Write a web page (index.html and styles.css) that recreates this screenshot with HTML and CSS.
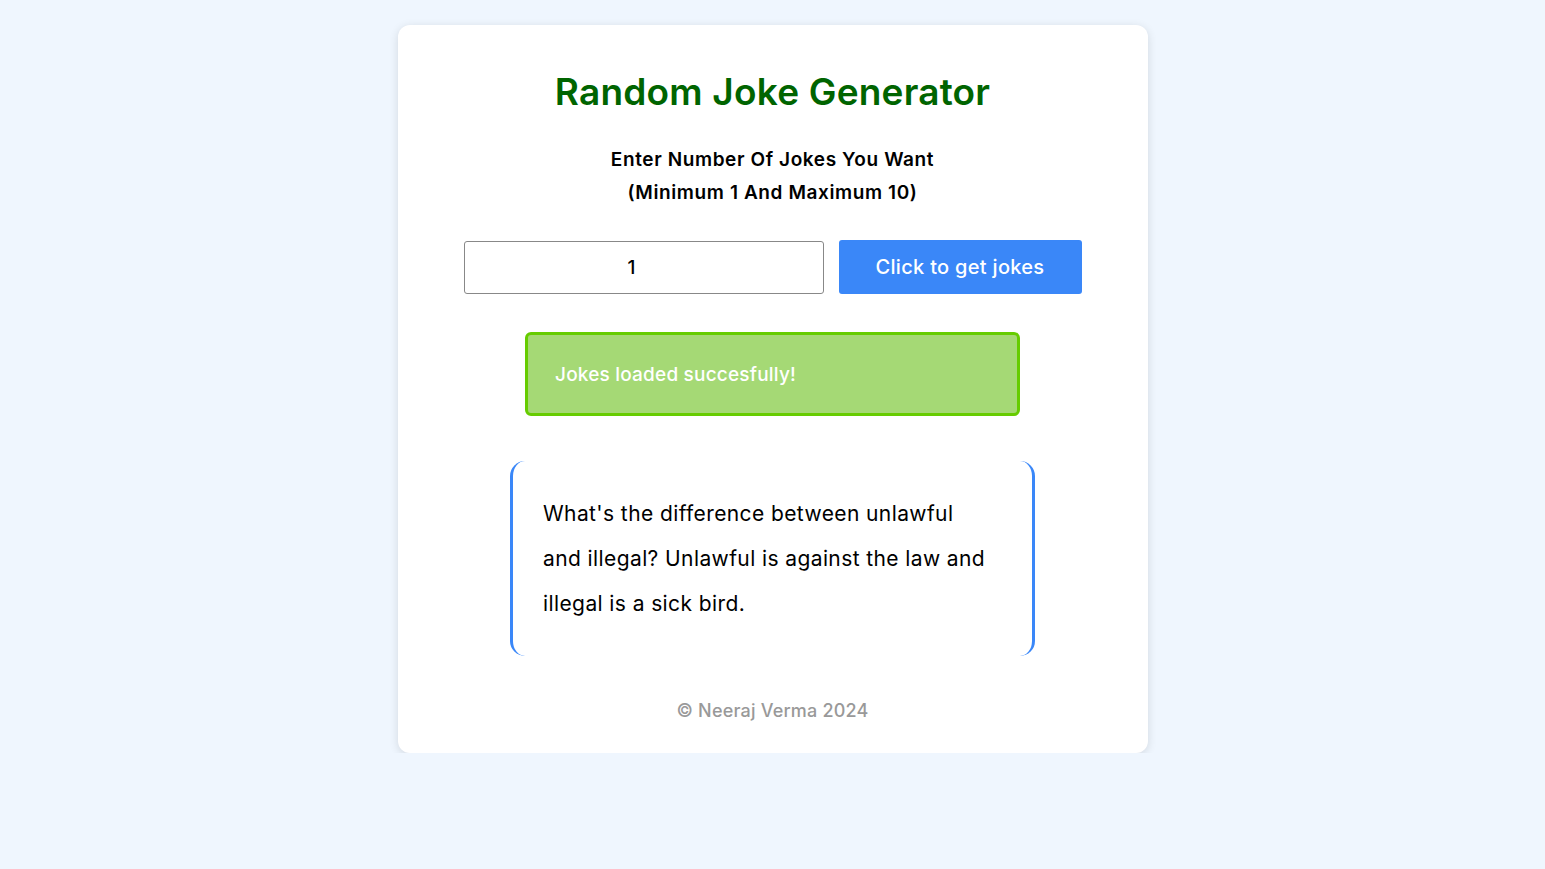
FILE: index.html
```html
<!DOCTYPE html>
<html lang="en">
<head>
<meta charset="utf-8">
<title>Random Joke Generator</title>
<link rel="stylesheet" href="styles.css">
</head>
<body>
<main class="card">
  <h1 class="title">Random Joke Generator</h1>
  <p class="subtitle">Enter Number Of Jokes You Want<br>(Minimum 1 And Maximum 10)</p>
  <div class="controls">
    <input class="count" type="number" value="1" min="1" max="10">
    <button class="get-btn" type="button">Click to get jokes</button>
  </div>
  <div class="status">Jokes loaded succesfully!</div>
  <div class="joke">
    <p>What's the difference between unlawful and illegal? Unlawful is against the law and illegal is a sick bird.</p>
  </div>
  <footer class="footer">© Neeraj Verma 2024</footer>
</main>
</body>
</html>
```
FILE: styles.css
```css
* { box-sizing: border-box; }
body {
  margin: 0;
  background: #eff6fe;
  font-family: Inter, "Open Sans", sans-serif;
  color: #000;
}
.card {
  width: 750px;
  margin: 25px auto 0;
  background: #fff;
  border-radius: 12px;
  box-shadow: 0 2px 10px rgba(0, 0, 0, 0.12);
  padding: 45px 30px 30px;
  display: flex;
  flex-direction: column;
  align-items: center;
}
.title {
  margin: 0;
  font-size: 37px;
  line-height: 43px;
  font-weight: 600;
  letter-spacing: 0.2px;
  color: #006400;
}
.subtitle {
  margin: 30px 0 0;
  text-align: center;
  font-size: 19px;
  line-height: 33px;
  font-weight: 600;
  letter-spacing: 0.6px;
}
.controls {
  margin-top: 31px;
  display: flex;
  gap: 15px;
  align-items: center;
}
.count {
  width: 360px;
  height: 53px;
  border: 1px solid #888;
  border-radius: 3px;
  padding: 0 25px 0 1px;
  text-align: center;
  font-family: inherit;
  font-size: 19px;
  font-weight: 500;
  color: #000;
  -moz-appearance: textfield;
}
.count::-webkit-outer-spin-button,
.count::-webkit-inner-spin-button { -webkit-appearance: none; margin: 0; }
.get-btn {
  width: 243px;
  height: 54px;
  border: none;
  border-radius: 3px;
  background: #3a87f8;
  color: #fff;
  font-family: inherit;
  font-size: 20px;
  font-weight: 500;
  letter-spacing: 0.3px;
}
.status {
  margin-top: 38px;
  width: 495px;
  height: 84px;
  border: 3px solid #66cc00;
  border-radius: 6px;
  background: #a5d975;
  color: #fff;
  font-size: 19px;
  font-weight: 500;
  letter-spacing: 0.2px;
  padding: 0 27px;
  display: flex;
  align-items: center;
}
.joke {
  margin-top: 45px;
  width: 525px;
  border-left: 3px solid #3a87f8;
  border-right: 3px solid #3a87f8;
  border-radius: 15px;
  padding: 30px 42px 30px 30px;
}
.joke p {
  margin: 0;
  font-size: 21px;
  line-height: 45px;
  font-weight: 400;
  letter-spacing: 0.4px;
}
.footer {
  margin-top: 43px;
  font-size: 18px;
  line-height: 24px;
  font-weight: 500;
  letter-spacing: 0.2px;
  color: #999;
}
```
